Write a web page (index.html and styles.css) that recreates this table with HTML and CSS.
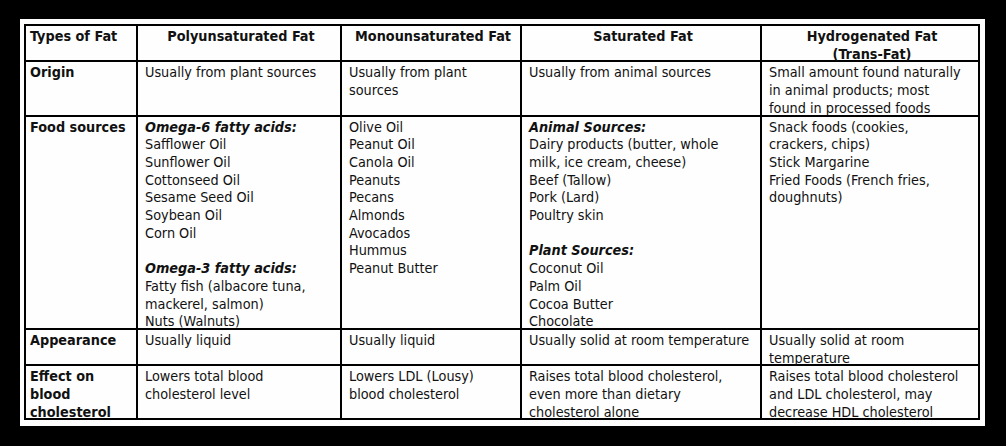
FILE: index.html
```html
<!DOCTYPE html>
<html lang="en">
<head>
<meta charset="utf-8">
<title>Types of Fat</title>
<link rel="stylesheet" href="styles.css">
</head>
<body>
<div class="sheet">
  <table class="fat">
    <colgroup>
      <col class="c1"><col class="c2"><col class="c3"><col class="c4"><col class="c5">
    </colgroup>
    <thead>
      <tr class="r-head">
        <th class="left"><div class="in">Types of Fat</div></th>
        <th><div class="in">Polyunsaturated Fat</div></th>
        <th><div class="in">Monounsaturated Fat</div></th>
        <th><div class="in">Saturated Fat</div></th>
        <th><div class="in">Hydrogenated Fat<br>(Trans-Fat)</div></th>
      </tr>
    </thead>
    <tbody>
      <tr class="r-origin">
        <th class="left"><div class="in">Origin</div></th>
        <td><div class="in">Usually from plant sources</div></td>
        <td><div class="in">Usually from plant<br>sources</div></td>
        <td><div class="in">Usually from animal sources</div></td>
        <td><div class="in">Small amount found naturally<br>in animal products; most<br>found in processed foods</div></td>
      </tr>
      <tr class="r-food">
        <th class="left"><div class="in">Food sources</div></th>
        <td>
          <div class="in">
            <div class="sub">Omega-6 fatty acids:</div>
            <div>Safflower Oil</div>
            <div>Sunflower Oil</div>
            <div>Cottonseed Oil</div>
            <div>Sesame Seed Oil</div>
            <div>Soybean Oil</div>
            <div>Corn Oil</div>
            <div class="gap"></div>
            <div class="sub">Omega-3 fatty acids:</div>
            <div>Fatty fish (albacore tuna,<br>mackerel, salmon)</div>
            <div>Nuts (Walnuts)</div>
          </div>
        </td>
        <td>
          <div class="in">
            <div>Olive Oil</div>
            <div>Peanut Oil</div>
            <div>Canola Oil</div>
            <div>Peanuts</div>
            <div>Pecans</div>
            <div>Almonds</div>
            <div>Avocados</div>
            <div>Hummus</div>
            <div>Peanut Butter</div>
          </div>
        </td>
        <td>
          <div class="in">
            <div class="sub">Animal Sources:</div>
            <div>Dairy products (butter, whole<br>milk, ice cream, cheese)</div>
            <div>Beef (Tallow)</div>
            <div>Pork (Lard)</div>
            <div>Poultry skin</div>
            <div class="gap"></div>
            <div class="sub">Plant Sources:</div>
            <div>Coconut Oil</div>
            <div>Palm Oil</div>
            <div>Cocoa Butter</div>
            <div>Chocolate</div>
          </div>
        </td>
        <td>
          <div class="in">
            <div>Snack foods (cookies,<br>crackers, chips)</div>
            <div>Stick Margarine</div>
            <div>Fried Foods (French fries,<br>doughnuts)</div>
          </div>
        </td>
      </tr>
      <tr class="r-appear">
        <th class="left"><div class="in">Appearance</div></th>
        <td><div class="in">Usually liquid</div></td>
        <td><div class="in">Usually liquid</div></td>
        <td><div class="in">Usually solid at room temperature</div></td>
        <td><div class="in">Usually solid at room<br>temperature</div></td>
      </tr>
      <tr class="r-effect">
        <th class="left"><div class="in">Effect on<br>blood<br>cholesterol</div></th>
        <td><div class="in">Lowers total blood<br>cholesterol level</div></td>
        <td><div class="in">Lowers LDL (Lousy)<br>blood cholesterol</div></td>
        <td><div class="in">Raises total blood cholesterol,<br>even more than dietary<br>cholesterol alone</div></td>
        <td><div class="in">Raises total blood cholesterol<br>and LDL cholesterol, may<br>decrease HDL cholesterol</div></td>
      </tr>
    </tbody>
  </table>
</div>
</body>
</html>
```

FILE: styles.css
```css
html, body {
  margin: 0;
  padding: 0;
  background: #000;
}
body {
  width: 1006px;
  height: 446px;
  overflow: hidden;
  padding-top: 19px;
  box-sizing: border-box;
}
.sheet {
  margin-left: 20px;
  width: 965px;
  height: 407px;
  box-sizing: border-box;
  background: #fefefe;
  padding: 5px 6px 0 4px;
}
.fat {
  border-collapse: collapse;
  table-layout: fixed;
  width: 954px;
  font-family: "DejaVu Sans Condensed", "DejaVu Sans", sans-serif;
  font-size: 14.3px;
  line-height: 17.7px;
  color: #111;
}
.c1 { width: 112px; }
.c2 { width: 204px; }
.c3 { width: 180px; }
.c4 { width: 240px; }
.c5 { width: 218px; }
.fat th,
.fat td {
  border: 2px solid #000;
  vertical-align: top;
  padding: 0 3px 0 7px;
  white-space: nowrap;
}
.fat .in {
  padding-top: 2px;
  margin-bottom: -3px;
}
.fat th {
  font-weight: bold;
  text-align: center;
}
.fat th.left {
  text-align: left;
  padding-left: 4px;
}
.fat td {
  font-weight: normal;
  text-align: left;
}
.sub {
  font-weight: bold;
  font-style: italic;
}
.gap {
  height: 17.7px;
}
```
